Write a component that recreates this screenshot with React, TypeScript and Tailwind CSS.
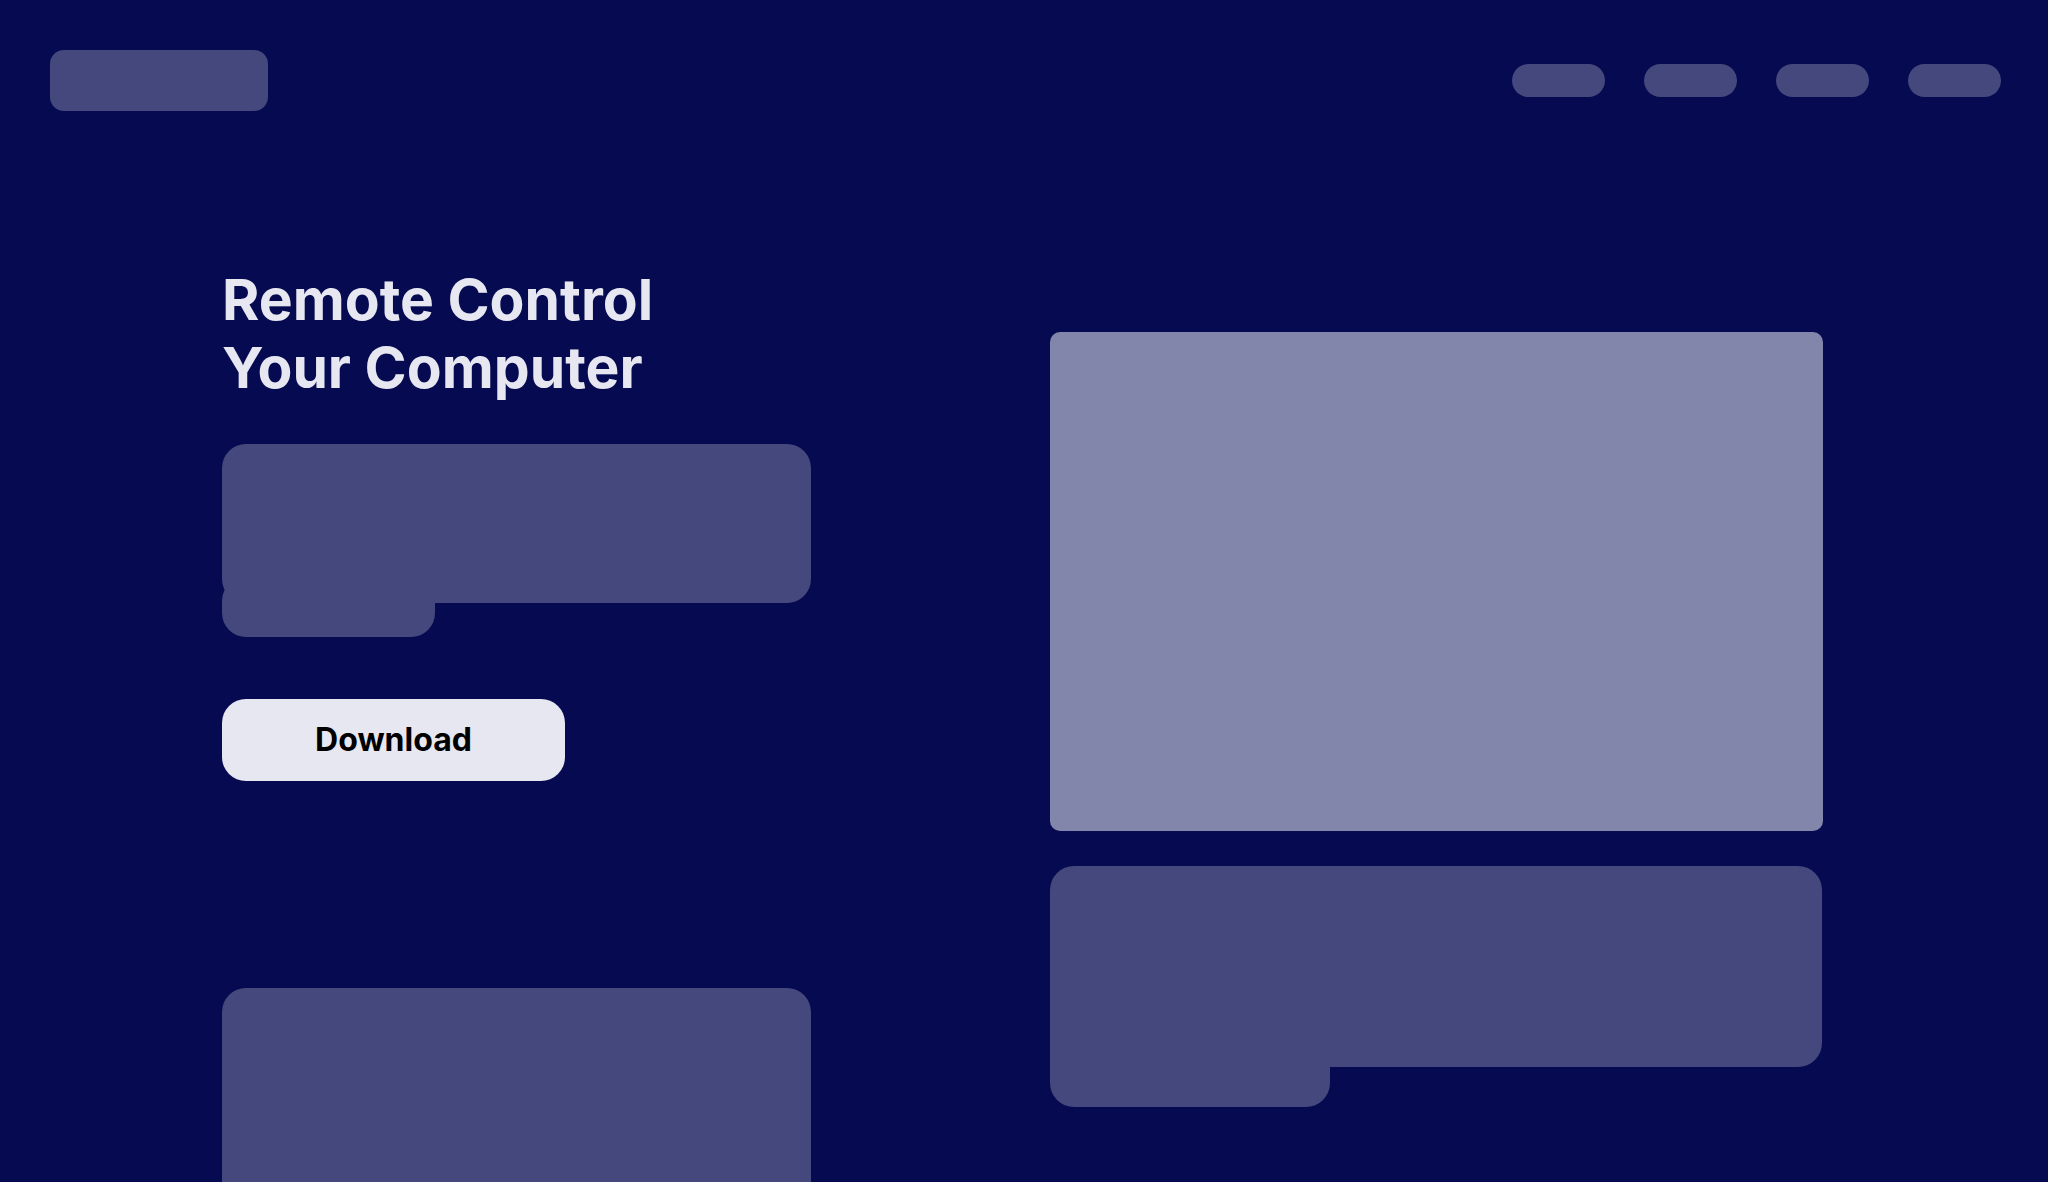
const navItems = ["one", "two", "three", "four"];

function Header() {
  return (
    <header className="flex items-center justify-between pl-[50px] pr-[47px] pt-[50px]">
      <div className="h-[61px] w-[218px] rounded-[14px] bg-[#44487d]" />
      <nav className="flex items-center gap-[39px]">
        {navItems.map((k) => (
          <div key={k} className="h-[33px] w-[93px] rounded-full bg-[#44487d]" />
        ))}
      </nav>
    </header>
  );
}

export default function App() {
  return (
    <div className="h-screen overflow-hidden bg-[#050a51] font-['Inter',sans-serif]">
      <Header />
      <main className="flex justify-between pl-[222px] pr-[225px]">
        <section className="flex w-[589px] flex-col pt-[155px]">
          <h1 className="text-[57px] font-bold leading-[68px] text-[#e6e7f0]">
            Remote Control
            <br />
            Your Computer
          </h1>
          {/* skeleton paragraph, short last line tucked under */}
          <div className="mt-[42px] flex flex-col">
            <div className="h-[159px] w-[589px] rounded-3xl bg-[#44487d]" />
            <div className="-mt-[26px] h-[60px] w-[213px] rounded-3xl bg-[#44487d]" />
          </div>
          <button
            type="button"
            className="mt-[62px] flex h-[82px] w-[343px] items-center justify-center rounded-3xl bg-[#e6e7f0] text-[32px] font-bold text-black"
          >
            Download
          </button>
          <div className="mt-[207px] h-[260px] w-[589px] rounded-3xl bg-[#44487d]" />
        </section>
        <section className="flex w-[773px] flex-col pt-[221px]">
          <div className="h-[499px] w-full rounded-[10px] bg-[#8286aa]" />
          <div className="mt-[35px] flex flex-col">
            <div className="h-[201px] w-[772px] rounded-3xl bg-[#44487d]" />
            <div className="-mt-[40px] h-[80px] w-[280px] rounded-b-3xl bg-[#44487d]" />
          </div>
        </section>
      </main>
    </div>
  );
}
